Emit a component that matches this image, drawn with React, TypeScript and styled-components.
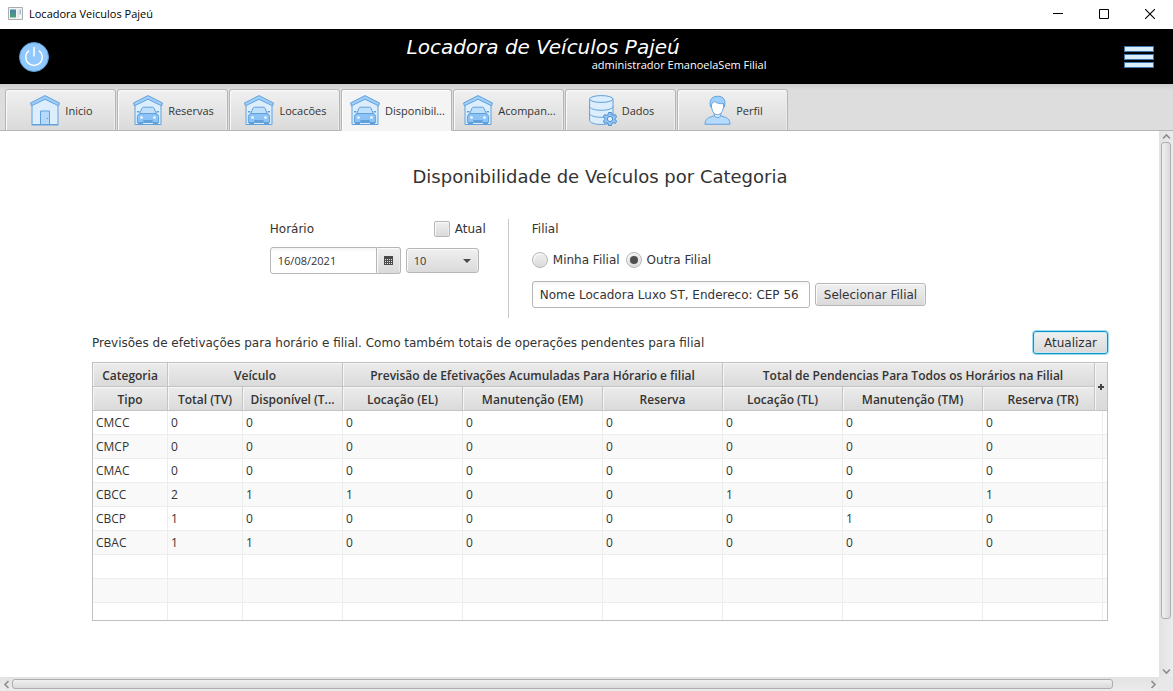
import React, { useState } from "react";
import styled, { createGlobalStyle, css } from "styled-components";

const ui = '"Open Sans", "Noto Sans", sans-serif';
const wide = '"DejaVu Sans", sans-serif';
const line = "#b6b6b6";

const GlobalStyle = createGlobalStyle`
  *, *::before, *::after { box-sizing: border-box; }
  body { margin: 0; background: #fff; color: #333; font: 11px/16px ${ui}; }
  button, input, select { font: inherit; color: inherit; margin: 0; }
  button { padding: 0; border: 0; background: none; }
`;

const raised = css`
  border: 1px solid ${line};
  background: linear-gradient(#f0f0f0, #dadada);
  box-shadow: inset 1px 1px 0 #fafafa, inset -1px 0 0 #ececec;
`;

const Window = styled.div`
  display: flex;
  flex-direction: column;
  min-height: 100vh;
`;

const TitleBar = styled.header`
  display: flex;
  align-items: center;
  gap: 6px;
  height: 29px;
  padding: 0 0 2px 8px;
  color: #000;
`;

const WindowTitle = styled.span`
  flex: 1;
`;

const WindowButton = styled.button`
  display: grid;
  place-items: center;
  width: 46px;
  height: 27px;
`;

const WindowButtons = styled.div`
  display: flex;
`;

const Banner = styled.div`
  display: grid;
  grid-template-columns: 1fr 360px 1fr;
  align-items: center;
  height: 55px;
  padding: 0 19px;
  background: #000;
  color: #fff;
`;

const BannerButton = styled.button<{ $end?: boolean }>`
  display: block;
  justify-self: ${(p) => (p.$end ? "end" : "start")};
  svg { display: block; }
`;

const BannerText = styled.div`
  align-self: start;
  padding-top: 8px;
`;

const Brand = styled.h1`
  margin: 0;
  font: italic 400 20px/20px ${wide};
`;

const UserLine = styled.p`
  margin: 0;
  text-align: right;
  line-height: 16px;
`;

const TabStrip = styled.nav`
  display: flex;
  gap: 1px;
  height: 47px;
  padding: 5px 5px 0;
  border-bottom: 1px solid ${line};
  background: linear-gradient(#cdcdcd, #dddddd 6px);
`;

const Tab = styled.button<{ $active: boolean }>`
  display: flex;
  align-items: center;
  justify-content: center;
  gap: 5px;
  width: 111px;
  height: 42px;
  padding: 1px 0 0 2px;
  ${raised}
  border-radius: 3px 3px 0 0;
  white-space: nowrap;
  ${(p) =>
    p.$active &&
    css`
      background: #f4f4f4;
      border-bottom-color: #f4f4f4;
      box-shadow: inset 1px 1px 0 #fff;
    `}
  svg { flex: none; }
`;

const Body = styled.div`
  flex: 1;
  display: grid;
  grid-template-columns: minmax(0, 1fr) 14px;
  grid-template-rows: 1fr 14px;
`;

const Viewport = styled.main`
  overflow: hidden;
  background: #fff;
`;

const Sheet = styled.div`
  min-width: 1200px;
  padding: 34px 92px 56px;
`;

const Heading = styled.h2`
  margin: 0 0 30px;
  text-align: center;
  font: 400 18px/24px ${wide};
`;

const Filters = styled.div`
  display: flex;
  justify-content: center;
  min-height: 99px;
  padding-right: 4px;
  font: 12px/20px ${wide};
`;

const Group = styled.fieldset<{ $width?: number }>`
  width: ${(p) => (p.$width ? `${p.$width}px` : "auto")};
  min-width: 0;
  margin: 0;
  padding: 0;
  border: 0;
`;

const GroupHead = styled.div`
  display: flex;
  justify-content: space-between;
`;

const Separator = styled.div`
  width: 1px;
  margin: 0 23px 0 22px;
  background: #c8c8c8;
`;

const Choice = styled.label`
  display: flex;
  align-items: center;
  gap: 5px;
`;

const Check = styled.input`
  appearance: none;
  width: 16px;
  height: 16px;
  ${raised}
  border-radius: 2px;
  &:checked { background: #777; }
`;

const Radio = styled.input`
  appearance: none;
  display: grid;
  place-items: center;
  width: 16px;
  height: 16px;
  ${raised}
  border-radius: 50%;
  &:checked::after {
    content: "";
    width: 8px;
    height: 8px;
    border-radius: 50%;
    background: #4e4e4e;
  }
`;

const TimeRow = styled.div`
  display: flex;
  align-items: center;
  gap: 5px;
  margin-top: 8px;
  font: 11px/16px ${ui};
`;

const RadioRow = styled.div`
  display: flex;
  gap: 6px;
  margin: 11px 0;
`;

const BranchRow = styled.div`
  display: flex;
  align-items: center;
  gap: 5px;
`;

const TextField = styled.input`
  height: 27px;
  padding: 0 7px;
  border: 1px solid ${line};
  border-radius: 3px;
  background: linear-gradient(#f4f4f4, #fff 4px);
`;

const BranchField = styled(TextField)`
  width: 278px;
`;

const DatePicker = styled.div`
  display: flex;
`;

const DateField = styled(TextField)`
  width: 107px;
  border-radius: 3px 0 0 3px;
`;

const DateButton = styled.button`
  display: grid;
  place-items: center;
  width: 24px;
  ${raised}
  border-left: 0;
  border-radius: 0 3px 3px 0;
`;

const SelectBox = styled.div`
  position: relative;
`;

const Select = styled.select`
  appearance: none;
  display: block;
  width: 73px;
  height: 25px;
  padding: 0 7px;
  ${raised}
  border-radius: 3px;
`;

const SelectArrow = styled.svg`
  position: absolute;
  top: 11px;
  right: 8px;
  pointer-events: none;
`;

const Button = styled.button<{ $focused?: boolean }>`
  height: 23px;
  padding: 0 8px;
  ${raised}
  border-radius: 3px;
  line-height: 20px;
  white-space: nowrap;
  ${(p) =>
    p.$focused &&
    css`
      width: 75px;
      border-color: #0f93c4;
      box-shadow: 0 0 0 1px #9fdcf0, inset 0 0 0 1px #cdeaf3;
    `}
`;

const Caption = styled.div`
  display: flex;
  align-items: flex-start;
  justify-content: space-between;
  height: 24px;
  margin: 13px 0 7px;
  font: 12px/24px ${wide};
`;

const CaptionText = styled.p`
  margin: 0;
`;

const TableFrame = styled.div`
  position: relative;
  height: 259px;
  overflow: hidden;
  border: 1px solid #c0c0c0;
`;

const Table = styled.table`
  width: 100%;
  table-layout: fixed;
  border-collapse: separate;
  border-spacing: 0;
`;

const Head = styled.th<{ $end?: boolean }>`
  height: 24px;
  padding: 2px 5px 0;
  overflow: hidden;
  border: solid #c4c4c4;
  border-width: 0 ${(p) => (p.$end ? 0 : 1)}px 1px 0;
  background: linear-gradient(#ececec, #dadada);
  box-shadow: inset 1px 1px 0 #f6f6f6;
  font: 600 12px/16px ${ui};
  text-align: center;
  white-space: nowrap;
`;

const Line = styled.tr`
  &:nth-child(even) { background: #f9f9f9; }
`;

const Cell = styled.td`
  height: 24px;
  padding: 0 3px;
  border: solid #ededed;
  border-width: 0 1px 1px 0;
  font-size: 12px;
  &:last-child { border-right: 0; }
`;

const ColumnMenu = styled.button`
  position: absolute;
  top: 0;
  right: 0;
  display: grid;
  place-items: center;
  width: 13px;
  height: 48px;
  border: solid #c4c4c4;
  border-width: 0 0 1px 1px;
  background: linear-gradient(#ececec, #dadada);
  box-shadow: inset 1px 1px 0 #f6f6f6;
`;

const ScrollBar = styled.div<{ $vertical?: boolean }>`
  display: flex;
  flex-direction: ${(p) => (p.$vertical ? "column" : "row")};
  padding: ${(p) => (p.$vertical ? "0 2px" : "2px 0")};
  background: linear-gradient(${(p) => (p.$vertical ? "to right" : "to bottom")}, #e2e2e2, #ececec);
`;

const ScrollArrow = styled.button<{ $vertical?: boolean }>`
  display: grid;
  place-items: center;
  ${(p) => (p.$vertical ? "height: 11px;" : "width: 12px;")}
`;

const Track = styled.div<{ $vertical?: boolean }>`
  flex: 1;
  display: flex;
  flex-direction: ${(p) => (p.$vertical ? "column" : "row")};
`;

const Thumb = styled.div<{ $vertical?: boolean; $share: number }>`
  flex: 0 0 ${(p) => p.$share}%;
  border: 1px solid #aeaeae;
  border-radius: 3px;
  background: linear-gradient(${(p) => (p.$vertical ? "to right" : "to bottom")}, #f0f0f0, #dadada);
`;

const Corner = styled.div`
  background: #e8e8e8;
`;

const edge = "#62a0d9";
const pale = "#dceefd";
const mid = "#9fcffb";

const Roof = () => (
  <>
    <path d="M2 9 15 2.5 28 9V29.5H2Z" fill={pale} stroke={edge} strokeWidth="1" />
    <path d="M15 .6 29.5 8 28.6 10.8 15 4.2 1.4 10.8.5 8Z" fill={mid} stroke={edge} strokeWidth="1" strokeLinejoin="round" />
  </>
);

const HouseIcon = () => (
  <svg width="30" height="31" viewBox="0 0 30 31">
    <Roof />
    <path d="M10.5 29.5V16h9v13.5Z" fill="#b5daf9" stroke={edge} />
    <circle cx="17.3" cy="23.5" r=".8" fill={edge} />
    <path d="M1.5 30h27" stroke={edge} />
  </svg>
);

const GarageIcon = () => (
  <svg width="30" height="31" viewBox="0 0 30 31">
    <Roof />
    <path d="M5.5 27v2.500h4V27ZM20.500 27v2.500h4V27Z" fill={edge} stroke={edge} />
    <path d="M6.800 18.500 9 13.200q.4-1 1.400-1h9.200q1 0 1.400 1l2.200 5.300Z" fill="#bfdffb" stroke={edge} />
    <path d="M4 16.800h2.500M23.500 16.800H26" stroke={edge} strokeWidth="1.600" />
    <path d="M7 18.500h16q2.600 1 2.600 3V27.500H4.400V21.500q0-2 2.600-3Z" fill="#8cc3f7" stroke={edge} />
    <path d="M10 25h10l-1 2.500h-8Z" fill={edge} />
    <circle cx="8.500" cy="22.500" r="1.300" fill="#fff" />
    <circle cx="21.500" cy="22.500" r="1.300" fill="#fff" />
  </svg>
);

const DataIcon = () => (
  <svg width="28" height="31" viewBox="0 0 28 31">
    <path d="M.6 4v21.500c0 2 5 4 11.700 4s11.700-2 11.700-4V4" fill={pale} stroke={edge} />
    <ellipse cx="12.300" cy="4" rx="11.700" ry="3.400" fill={pale} stroke={edge} />
    <path d="M.6 11.500c0 2 5 3.800 11.700 3.800S24 13.500 24 11.500M.6 18.500c0 2 5 3.800 11.700 3.800S24 20.500 24 18.500" fill="none" stroke={edge} />
    <path
      d="M19.600 17.500h2.800l.5 2 1.500.8 2-.7 1.200 2.200-1.300 1.500v1.400l1.300 1.500-1.200 2.200-2-.7-1.500.8-.5 2h-2.800l-.5-2-1.500-.8-2 .7-1.200-2.200 1.300-1.500v-1.400l-1.300-1.500 1.200-2.200 2 .7 1.500-.8Z"
      fill="#8fc4f6"
      stroke="#4f8fcb"
    />
    <circle cx="21" cy="24" r="2.600" fill="#e6f2fd" stroke="#4f8fcb" />
  </svg>
);

const PersonIcon = () => (
  <svg width="27" height="31" viewBox="0 0 28 31">
    <path d="M1 29.800c.2-5 2.500-6.600 6-7.600l4-1.300h6l4 1.300c3.500 1 5.800 2.600 6 7.600Z" fill="#b5dafb" stroke={edge} />
    <path d="M10.600 17.500v3.700q3.400 3.400 6.800 0v-3.700Z" fill={pale} stroke={edge} />
    <path d="M7.500 8.500c0 6.500 2.500 11.500 6.500 11.500s6.500-5 6.500-11.500L18 5H10Z" fill="#fff" stroke={edge} />
    <path d="M7 12C5.500 8 5.500.7 14.500.7 21 .7 23 6 21 12l-1-3.600c-4 .2-7-.6-9-2.200C8.500 7 8 9 7 12Z" fill={mid} stroke={edge} />
  </svg>
);

const tabs = [
  { label: "Inicio", Icon: HouseIcon },
  { label: "Reservas", Icon: GarageIcon },
  { label: "Locacões", Icon: GarageIcon },
  { label: "Disponibil...", Icon: GarageIcon },
  { label: "Acompan...", Icon: GarageIcon },
  { label: "Dados", Icon: DataIcon },
  { label: "Perfil", Icon: PersonIcon },
];

const columnWidths = [75, 75, 100, 120, 140, 120, 120, 140, 120];

const columns = [
  "Tipo",
  "Total (TV)",
  "Disponível (T...",
  "Locação (EL)",
  "Manutenção (EM)",
  "Reserva",
  "Locação (TL)",
  "Manutenção (TM)",
  "Reserva (TR)",
];

const rows: string[][] = [
  ["CMCC", "0", "0", "0", "0", "0", "0", "0", "0"],
  ["CMCP", "0", "0", "0", "0", "0", "0", "0", "0"],
  ["CMAC", "0", "0", "0", "0", "0", "0", "0", "0"],
  ["CBCC", "2", "1", "1", "0", "0", "1", "0", "1"],
  ["CBCP", "1", "0", "0", "0", "0", "0", "1", "0"],
  ["CBAC", "1", "1", "0", "0", "0", "0", "0", "0"],
  ...Array.from({ length: 3 }, () => Array(9).fill("")),
];

const Chevron = ({ turn }: { turn: number }) => (
  <svg width="9" height="9" viewBox="0 0 9 9">
    <path d="M1 6.500 4.500 3 8 6.500" fill="none" stroke="#8c8c8c" strokeWidth="1.600" transform={`rotate(${turn} 4.500 4.500)`} />
  </svg>
);

export default function App() {
  const [active, setActive] = useState(3);
  const [other, setOther] = useState(true);

  return (
    <Window>
      <GlobalStyle />
      <TitleBar>
        <svg width="15" height="13" viewBox="0 0 15 13">
          <defs>
            <linearGradient id="pane" x1="0" y1="0" x2="0" y2="1">
              <stop offset="0" stopColor="#4b7fa8" />
              <stop offset="1" stopColor="#4aa174" />
            </linearGradient>
          </defs>
          <path d="M.5.5h14v12H.5Z" fill="#f4f4f4" stroke="#a9adb0" />
          <path d="M2 2.500h6v8H2Z" fill="url(#pane)" />
          <path d="M9.500 2.500h1v8h-1Z" fill="#d5dbe0" />
          <path d="M11.500 2.500h1.500v5h-1.500Z" fill="#9fc0d3" />
        </svg>
        <WindowTitle>Locadora Veiculos Pajeú</WindowTitle>
        <WindowButtons>
          <WindowButton aria-label="Minimizar">
            <svg width="10" height="11"><path d="M0 5.500h10" stroke="#000" /></svg>
          </WindowButton>
          <WindowButton aria-label="Maximizar">
            <svg width="10" height="10"><path d="M.5.500h9v9h-9Z" fill="none" stroke="#000" /></svg>
          </WindowButton>
          <WindowButton aria-label="Fechar">
            <svg width="10" height="10"><path d="M0 0 10 10M10 0 0 10" stroke="#000" strokeWidth="1.100" /></svg>
          </WindowButton>
        </WindowButtons>
      </TitleBar>

      <Banner>
        <BannerButton aria-label="Sair">
          <svg width="30" height="30" viewBox="0 0 30 30">
            <circle cx="15" cy="15" r="14.500" fill="#90c7fc" stroke="#5b9bd5" />
            <path d="M10 8.600a8.300 8.300 0 1 0 10 0M15 5v9.500" fill="none" stroke="#fff" strokeWidth="1.500" />
          </svg>
        </BannerButton>
        <BannerText>
          <Brand>Locadora de Veículos Pajeú</Brand>
          <UserLine>administrador EmanoelaSem Filial</UserLine>
        </BannerText>
        <BannerButton $end aria-label="Menu">
          <svg width="30" height="22" viewBox="0 0 30 22">
            {[0, 8, 16].map((y) => (
              <rect key={y} x=".5" y={y + 0.5} width="29" height="5" fill="#dbeefe" stroke="#3f76ab" />
            ))}
          </svg>
        </BannerButton>
      </Banner>

      <TabStrip>
        {tabs.map(({ label, Icon }, i) => (
          <Tab key={label} $active={i === active} onClick={() => setActive(i)}>
            <Icon />
            {label}
          </Tab>
        ))}
      </TabStrip>

      <Body>
        <Viewport>
          <Sheet>
            <Heading>Disponibilidade de Veículos por Categoria</Heading>

            <Filters>
              <Group $width={216}>
                <GroupHead>
                  <label htmlFor="date">Horário</label>
                  <Choice>
                    <Check type="checkbox" />
                    Atual
                  </Choice>
                </GroupHead>
                <TimeRow>
                  <DatePicker>
                    <DateField id="date" defaultValue="16/08/2021" />
                    <DateButton aria-label="Abrir calendário">
                      <svg width="9" height="9" viewBox="0 0 9 9">
                        <path d="M0 0h9v9H0Z" fill="#4a4a4a" />
                        <path d="M1 3.500h7M1 5.500h7M1 7.500h7" stroke="#e8e8e8" strokeDasharray="1 1" />
                      </svg>
                    </DateButton>
                  </DatePicker>
                  <SelectBox>
                    <Select aria-label="Hora" defaultValue="10">
                      <option>10</option>
                      <option>11</option>
                    </Select>
                    <SelectArrow width="8" height="4"><path d="M0 0h8L4 4Z" fill="#4a4a4a" /></SelectArrow>
                  </SelectBox>
                </TimeRow>
              </Group>
              <Separator />
              <Group>
                <label htmlFor="branch">Filial</label>
                <RadioRow>
                  <Choice>
                    <Radio type="radio" name="branch" checked={!other} onChange={() => setOther(false)} />
                    Minha Filial
                  </Choice>
                  <Choice>
                    <Radio type="radio" name="branch" checked={other} onChange={() => setOther(true)} />
                    Outra Filial
                  </Choice>
                </RadioRow>
                <BranchRow>
                  <BranchField id="branch" defaultValue="Nome Locadora Luxo ST, Endereco: CEP 56" />
                  <Button>Selecionar Filial</Button>
                </BranchRow>
              </Group>
            </Filters>

            <Caption>
              <CaptionText>
                Previsões de efetivações para horário e filial. Como também totais de operações pendentes para filial
              </CaptionText>
              <Button $focused>Atualizar</Button>
            </Caption>

            <TableFrame>
              <Table>
                <colgroup>
                  {columnWidths.map((w, i) => (
                    <col key={i} width={w} />
                  ))}
                  <col />
                </colgroup>
                <thead>
                  <tr>
                    <Head>Categoria</Head>
                    <Head colSpan={2}>Veículo</Head>
                    <Head colSpan={3}>Previsão de Efetivações Acumuladas Para Hórario e filial</Head>
                    <Head colSpan={3} $end>Total de Pendencias Para Todos os Horários na Filial</Head>
                    <Head $end aria-hidden />
                  </tr>
                  <tr>
                    {columns.map((name, i) => (
                      <Head key={name} $end={i === 8}>{name}</Head>
                    ))}
                    <Head $end aria-hidden />
                  </tr>
                </thead>
                <tbody>
                  {rows.map((cells, r) => (
                    <Line key={r}>
                      {cells.map((value, c) => (
                        <Cell key={c}>{value}</Cell>
                      ))}
                      <Cell />
                    </Line>
                  ))}
                </tbody>
              </Table>
              <ColumnMenu aria-label="Colunas">
                <svg width="6" height="6"><path d="M0 3h6M3 0v6" stroke="#444" strokeWidth="2" /></svg>
              </ColumnMenu>
            </TableFrame>
          </Sheet>
        </Viewport>

        <ScrollBar $vertical>
          <ScrollArrow $vertical aria-label="Subir"><Chevron turn={0} /></ScrollArrow>
          <Track $vertical><Thumb $vertical $share={91} /></Track>
          <ScrollArrow $vertical aria-label="Descer"><Chevron turn={180} /></ScrollArrow>
        </ScrollBar>
        <ScrollBar>
          <ScrollArrow aria-label="Esquerda"><Chevron turn={-90} /></ScrollArrow>
          <Track><Thumb $share={97} /></Track>
          <ScrollArrow aria-label="Direita"><Chevron turn={90} /></ScrollArrow>
        </ScrollBar>
        <Corner />
      </Body>
    </Window>
  );
}
